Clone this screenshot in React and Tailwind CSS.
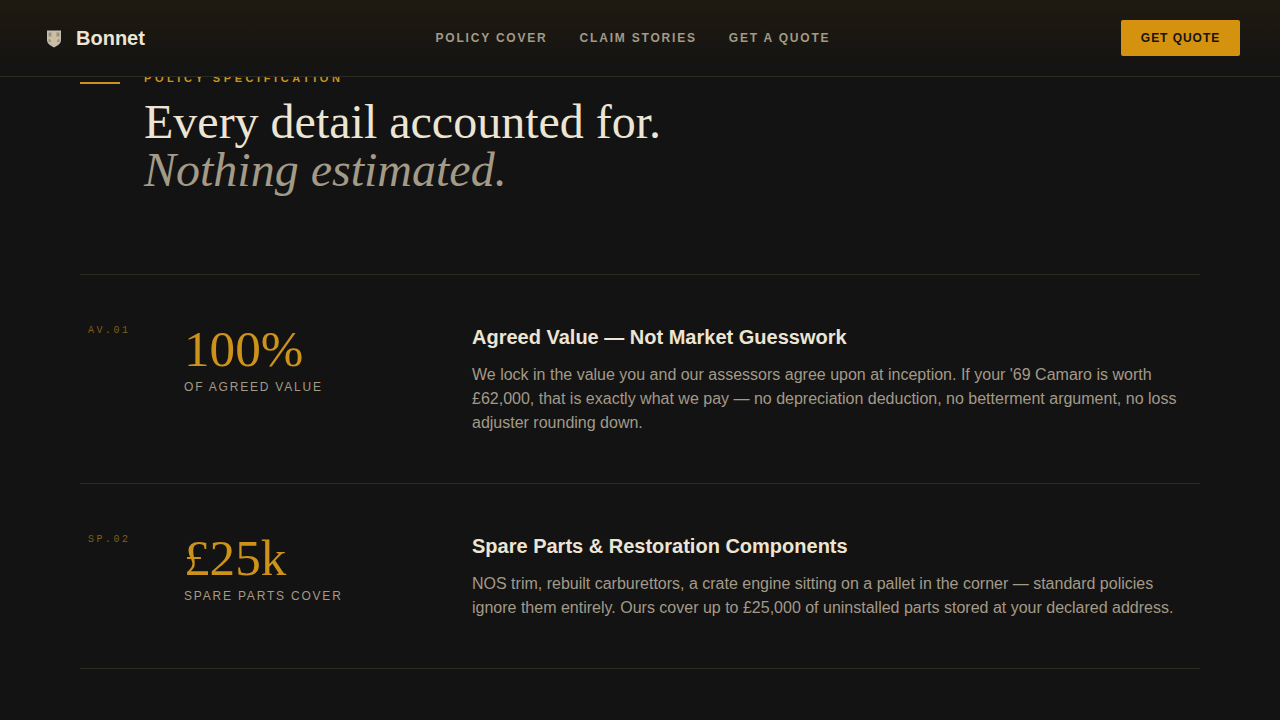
import React from 'react';

const rows = [
  {
    code: 'AV.01',
    stat: '100%',
    label: 'OF AGREED VALUE',
    title: 'Agreed Value — Not Market Guesswork',
    body: "We lock in the value you and our assessors agree upon at inception. If your '69 Camaro is worth £62,000, that is exactly what we pay — no depreciation deduction, no betterment argument, no loss adjuster rounding down.",
  },
  {
    code: 'SP.02',
    stat: '£25k',
    label: 'SPARE PARTS COVER',
    title: 'Spare Parts & Restoration Components',
    body: 'NOS trim, rebuilt carburettors, a crate engine sitting on a pallet in the corner — standard policies ignore them entirely. Ours cover up to £25,000 of uninstalled parts stored at your declared address.',
  },
];

const Crest = () => (
  <svg width="16" height="19" viewBox="0 0 16 19" className="shrink-0">
    <path d="M1 1.5h14v9.5c0 3.5-3.5 5.8-7 7.5-3.5-1.7-7-4-7-7.5z" fill="#c4beb0" />
    <path d="M2.5 3.5h3v4h-3zM10.5 3.5h3v4h-3zM2.5 10h2.5v3h-2.5zM11 10h2.5v3h-2.5z" fill="#97917f" />
    <path d="M8 3.6l2.2 2.2L8 8 5.8 5.8zM5.6 8.4l2 2-2 2-1.8-2zM10.4 8.4l1.8 2-1.8 2-2-2zM8 12l1.8 1.6L8 16l-1.8-2.4z" fill="#dcbc88" />
  </svg>
);

export default function App() {
  return (
    <div className="relative h-screen overflow-hidden bg-[#131313] font-['Liberation_Sans',sans-serif]">
      <header className="absolute inset-x-0 top-0 z-10 flex h-[77px] items-center justify-between border-b border-[#2a2a1e] bg-gradient-to-b from-[#1f1a10] to-[#131313] pl-[46px] pr-10">
        <div className="flex items-center gap-[14px]">
          <Crest />
          <span className="text-xl font-bold text-[#ede5d4]">Bonnet</span>
        </div>
        <nav className="flex items-center gap-8 text-xs font-bold tracking-[0.15em] text-[#a39a88]">
          <span>POLICY COVER</span>
          <span>CLAIM STORIES</span>
          <span>GET A QUOTE</span>
        </nav>
        <button className="h-9 w-[119px] rounded-[2px] bg-[#d4920f] text-xs font-bold tracking-[0.08em] text-[#131313]">
          GET QUOTE
        </button>
      </header>

      <main className="px-20 pt-[70px]">
        <div className="flex gap-6 pb-[80px]">
          <div className="mt-3 h-0.5 w-10 shrink-0 bg-[#cc921a]" />
          <div>
            <p className="text-[11px] leading-4 font-bold tracking-[0.325em] text-[#cc921a]">POLICY SPECIFICATION</p>
            <h1 className="mt-3 font-['Liberation_Serif',serif] text-5xl leading-[48px] font-normal text-[#ede5d4]">
              Every detail accounted for.
              <br />
              <em className="text-[#a39a88]">Nothing estimated.</em>
            </h1>
          </div>
        </div>

        <div className="border-b border-[#2a2a1e]">
          {rows.map((row) => (
            <section key={row.code} className="grid grid-cols-[104px_288px_1fr] border-t border-[#2a2a1e] py-12">
              <span className="pt-0.5 pl-2 font-['Liberation_Mono',monospace] text-[10px] leading-3 tracking-[0.25em] text-[#7f5f18]">
                {row.code}
              </span>
              <div>
                <div className="font-['Liberation_Serif',serif] text-[51.2px] leading-[52px] text-[#cc921a]">{row.stat}</div>
                <div className="mt-1 text-xs tracking-[0.15em] text-[#a39a88]">{row.label}</div>
              </div>
              <div>
                <h3 className="text-xl leading-7 font-bold text-[#ede5d4]">{row.title}</h3>
                <p className="mt-3 text-base leading-6 text-[#a39a88]">{row.body}</p>
              </div>
            </section>
          ))}
        </div>
      </main>
    </div>
  );
}
